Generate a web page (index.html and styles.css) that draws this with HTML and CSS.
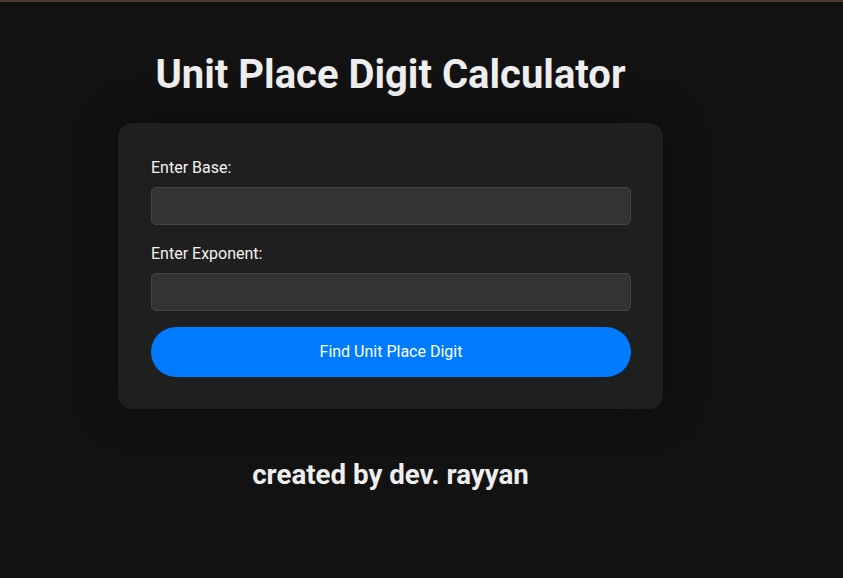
FILE: index.html
```html
<!DOCTYPE html>
<html lang="en">
<head>
<meta charset="utf-8">
<title>Unit Place Digit Calculator</title>
<link rel="stylesheet" href="styles.css">
</head>
<body>
<div class="page">
  <h1 class="title">Unit Place Digit Calculator</h1>
  <div class="card">
    <label class="label" for="base">Enter Base:</label>
    <input class="field" id="base" type="number">
    <label class="label second" for="exp">Enter Exponent:</label>
    <input class="field" id="exp" type="number">
    <button class="btn" type="button">Find Unit Place Digit</button>
  </div>
  <h2 class="footer">created by dev. rayyan</h2>
</div>
</body>
</html>
```
FILE: styles.css
```css
html, body {
  margin: 0;
  padding: 0;
  background: #121212;
  height: 100%;
}
body {
  border-top: 2px solid #4e3a35;
  box-sizing: border-box;
  font-family: Roboto, "Liberation Sans", sans-serif;
  color: #eeeeee;
}
.page {
  width: 781px;
  display: flex;
  flex-direction: column;
  align-items: center;
}
.title {
  margin: 49px 0 0;
  font-size: 40px;
  line-height: 48px;
  font-weight: 700;
  color: #eeeeee;
}
.card {
  margin-top: 24px;
  width: 545px;
  box-sizing: border-box;
  padding: 35px 32px 32px 33px;
  background: #1f1f1f;
  border-radius: 14px;
  box-shadow: 0 0 40px rgba(0, 0, 0, 0.35);
  display: flex;
  flex-direction: column;
}
.label {
  font-size: 16px;
  line-height: 20px;
  color: #f2f2f2;
  margin-bottom: 9px;
}
.label.second {
  margin-top: 19px;
}
.field {
  height: 38px;
  box-sizing: border-box;
  background: #333333;
  border: 1px solid #444444;
  border-radius: 5px;
  color: #eee;
  font-size: 16px;
  padding: 0 10px;
  outline: none;
}
.btn {
  margin-top: 16px;
  height: 50px;
  padding: 0 0 2px;
  border: none;
  border-radius: 25px;
  background: #007bff;
  color: #ffffff;
  font-family: Roboto, "Liberation Sans", sans-serif;
  font-size: 16px;
}
.footer {
  margin: 50px 0 0;
  font-size: 27.7px;
  line-height: 32px;
  font-weight: 700;
  color: #eeeeee;
}
```
